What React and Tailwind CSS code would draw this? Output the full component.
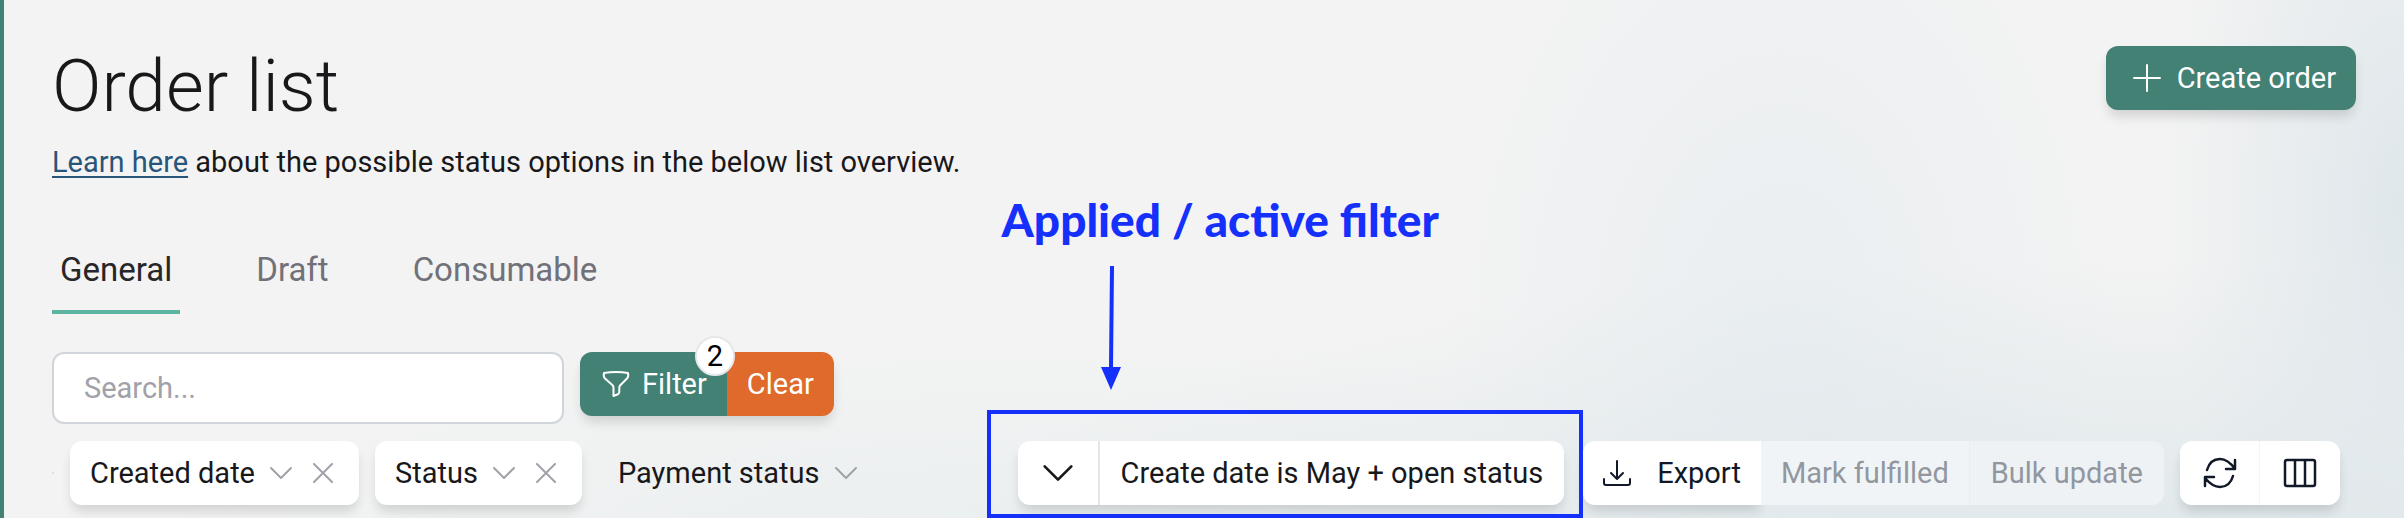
import React, { useState } from 'react';

const shadow = 'shadow-[0_8px_12px_-2px_rgba(0,0,0,0.14)]';

const tabs = ['General', 'Draft', 'Consumable'];

function Chevron({ className }) {
    return (
        <svg viewBox="0 0 24 24" className={className} fill="none" stroke="currentColor" strokeWidth="2" strokeLinecap="round" strokeLinejoin="round">
            <path d="M2 7l10 10L22 7" />
        </svg>
    );
}

function Cross() {
    return (
        <svg viewBox="0 0 20 20" className="h-5 w-5 text-[#a1a1aa]" fill="none" stroke="currentColor" strokeWidth="2" strokeLinecap="round">
            <path d="M1 1l18 18M19 1L1 19" />
        </svg>
    );
}

function FilterChip({ label }) {
    return (
        <div className={`flex h-16 items-center gap-5 rounded-xl bg-white pl-5 pr-[26px] ${shadow}`}>
            <button className="flex items-center gap-[14px] whitespace-nowrap">
                {label}
                <Chevron className="h-6 w-6 text-[#a1a1aa]" />
            </button>
            <button aria-label={`Remove ${label}`}>
                <Cross />
            </button>
        </div>
    );
}

function ActiveFilter() {
    return (
        <div className="relative mr-[19px]">
            <div className={`flex h-16 rounded-xl bg-white ${shadow}`}>
                <button aria-label="Saved filters" className="flex w-[82px] items-center justify-center border-r-2 border-[#e5e7eb]">
                    <Chevron className="h-8 w-8" />
                </button>
                <button className="whitespace-nowrap px-[21px]">Create date is May + open status</button>
            </div>

            {/* Annotation */}
            <div className="pointer-events-none absolute -bottom-[13px] -left-[31px] -right-[19px] -top-[31px] border-4 border-[#1430fa]" />
            <div className="pointer-events-none absolute -left-4 bottom-[115px] flex flex-col gap-5 text-[#1430fa]">
                <span className="whitespace-nowrap font-['Lato','Liberation_Sans',sans-serif] text-[46px] font-black leading-[52px]">
                    Applied / active filter
                </span>
                <svg viewBox="0 0 20 124" className="ml-[99px] h-[124px] w-5" fill="currentColor">
                    <path d="M9 0h4l-1 101h8L10 124 0 101h8z" />
                </svg>
            </div>
        </div>
    );
}

export default function App() {
    const [tab, setTab] = useState('General');
    const [search, setSearch] = useState('');

    return (
        <div className="overflow-hidden border-l-4 border-[#428173] bg-[#f3f3f3] bg-[radial-gradient(ellipse_10%_100%_at_100%_40%,#dfe7ebff,#dfe7eb00),radial-gradient(ellipse_50%_60%_at_88%_110%,#dee7eaff,#dee7ea00),radial-gradient(ellipse_14%_100%_at_74%_65%,#e9eef1ff,#e9eef100),radial-gradient(ellipse_35%_40%_at_42%_105%,#eaeff0ff,#eaeff000)] pb-[13px] pl-12 font-['Roboto','Liberation_Sans',sans-serif] text-[29px] leading-10 text-[#18181b]">
            <header className="flex items-start justify-between pr-12">
                <h1 className="pt-[42px] text-[73px] font-light leading-[88px]">Order list</h1>
                <button className={`mt-[46px] flex h-16 items-center gap-4 rounded-xl bg-[#428173] pl-[27px] pr-5 text-white ${shadow}`}>
                    <svg viewBox="0 0 28 28" className="h-7 w-7" stroke="currentColor" strokeWidth="2" strokeLinecap="round">
                        <path d="M14 1v26M1 14h26" />
                    </svg>
                    <span className="whitespace-nowrap">Create order</span>
                </button>
            </header>

            <p className="pt-3">
                <a href="#status" className="text-[#28557a] underline decoration-2 underline-offset-4">Learn here</a> about the possible status options in the below list overview.
            </p>

            {/* Tabs */}
            <nav className="mt-[46px] flex gap-[68px] text-[33px]">
                {tabs.map((name) => (
                    <button
                        key={name}
                        onClick={() => setTab(name)}
                        className={`h-[86px] border-b-4 px-2 pt-[2px] ${tab === name ? 'border-[#5cb5a2] text-[#27272a]' : 'border-transparent text-[#71717a]'}`}
                    >
                        {name}
                    </button>
                ))}
            </nav>

            {/* Search and filter */}
            <div className="mt-[38px] flex items-start gap-4">
                <input
                    type="text"
                    aria-label="Search"
                    placeholder="Search..."
                    value={search}
                    onChange={(e) => setSearch(e.target.value)}
                    className="h-[72px] w-[512px] rounded-xl border-2 border-[#d1d5db] bg-white px-[30px] placeholder:text-[#a1a1aa]"
                />
                <div className={`flex h-16 rounded-xl text-white ${shadow}`}>
                    <button className="relative flex items-center gap-3 rounded-l-xl bg-[#428173] pl-[22px] pr-5">
                        <svg viewBox="0 0 28 28" className="h-7 w-7" fill="none" stroke="currentColor" strokeWidth="2" strokeLinejoin="round">
                            <path d="M2 3c8-1.300 16-1.300 24 0 .6 2.500.5 4-1 5.500l-6.500 6.500c-.8.800-1.200 1.500-1.200 2.600v4.200c0 1.200-.6 2-1.500 2.500L11.500 26v-8.400c0-1.100-.4-1.800-1.200-2.600L3 8.500C1.500 7 1.400 5.500 2 3z" />
                        </svg>
                        Filter
                        <span className="absolute -right-2 -top-4 flex h-10 w-10 items-center justify-center rounded-full border-2 border-[#e5e7eb] bg-white text-black">2</span>
                    </button>
                    <button className="rounded-r-xl bg-[#e0692c] px-5">Clear</button>
                </div>
            </div>

            {/* Filter row */}
            <div className="mt-[17px] flex items-center justify-between pr-16">
                <div className="flex items-center gap-4">
                    <span className="h-[2px] w-[2px] bg-[#dddde0]" />
                    <FilterChip label="Created date" />
                    <FilterChip label="Status" />
                    <button className="flex items-center gap-[14px] whitespace-nowrap pl-5">
                        Payment status
                        <Chevron className="h-6 w-6 text-[#a1a1aa]" />
                    </button>
                </div>

                <div className="flex items-center">
                    <ActiveFilter />
                    <div className="mr-4 flex h-16 text-[#111827]">
                        <button className={`flex items-center gap-[26px] rounded-l-xl bg-white px-5 ${shadow}`}>
                            <svg viewBox="0 0 28 28" className="h-7 w-7" fill="none" stroke="currentColor" strokeWidth="2" strokeLinecap="round" strokeLinejoin="round">
                                <path d="M14 2v18M8 14l6 6 6-6M1 20v4a2 2 0 0 0 2 2h22a2 2 0 0 0 2-2v-4" />
                            </svg>
                            Export
                        </button>
                        <button disabled className="whitespace-nowrap bg-[#f0f4f6] px-5 text-[#92979f]">Mark fulfilled</button>
                        <button disabled className="whitespace-nowrap rounded-r-xl border-l border-[#e9edf0] bg-[#eef2f5] px-[21px] text-[#92979f]">Bulk update</button>
                    </div>
                    <div className={`flex h-16 rounded-xl bg-white text-[#111827] ${shadow}`}>
                        <button aria-label="Refresh" className="flex w-20 items-center justify-center rounded-l-xl border-r border-[#f3f4f6]">
                            <svg viewBox="0 0 34 32" className="h-8 w-[34px]" fill="none" stroke="currentColor" strokeWidth="2.5" strokeLinecap="round" strokeLinejoin="round">
                                <path d="M4 13C6 6 11 2 17 2c6 0 10 3 15 10M32 3v9h-9M30 19c-2 7-7 11-13 11-6 0-10-3-15-9M2 29v-9h9" />
                            </svg>
                        </button>
                        <button aria-label="Columns" className="flex w-20 items-center justify-center">
                            <svg viewBox="0 0 34 30" className="h-[30px] w-[34px]" fill="none" stroke="currentColor" strokeWidth="2.5">
                                <rect x="2" y="2" width="30" height="26" rx="2" />
                                <path d="M12 2v26M22 2v26" />
                            </svg>
                        </button>
                    </div>
                </div>
            </div>
        </div>
    );
}
